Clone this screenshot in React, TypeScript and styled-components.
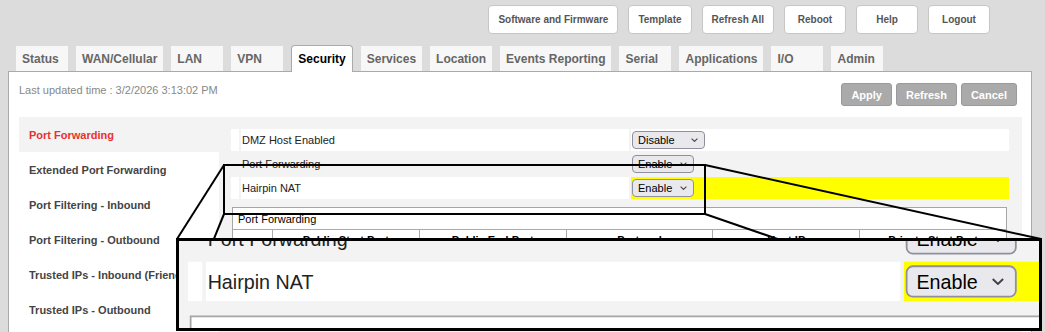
import React from 'react'
import styled, { createGlobalStyle } from 'styled-components'

const GlobalStyle = createGlobalStyle`
  html, body {
    margin: 0;
    padding: 0;
    background: #dcdcdc;
    overflow: hidden;
  }
  body {
    font-family: "Liberation Sans", Arial, sans-serif;
  }
`

const topButtons = ['Software and Firmware', 'Template', 'Refresh All', 'Reboot', 'Help', 'Logout']
const tabs = [
  'Status',
  'WAN/Cellular',
  'LAN',
  'VPN',
  'Security',
  'Services',
  'Location',
  'Events Reporting',
  'Serial',
  'Applications',
  'I/O',
  'Admin',
]
const navItems = [
  'Port Forwarding',
  'Extended Port Forwarding',
  'Port Filtering - Inbound',
  'Port Filtering - Outbound',
  'Trusted IPs - Inbound (Friends)',
  'Trusted IPs - Outbound',
  'Remote Management',
]
const settings = [
  { label: 'DMZ Host Enabled', value: 'Disable', width: 73, filled: true, highlight: false },
  { label: 'Port Forwarding', value: 'Enable', width: 62, filled: false, highlight: false },
  { label: 'Hairpin NAT', value: 'Enable', width: 62, filled: true, highlight: true },
]
const columns = ['Public Start Port', 'Public End Port', 'Protocol', 'Host IP', 'Private Start Port']

// source region of the magnifier and where the zoomed copy is shown
const SOURCE = { x: 224, y: 165, w: 481, h: 49 }
const TARGET = { x: 177, y: 239, w: 864, h: 91 }
const ZOOM = 1.79

const Page = styled.div`
  position: relative;
  width: 1045px;
  height: 332px;
  overflow: hidden;
  background: #dcdcdc;
`

const Screen = styled.div`
  width: 1045px;
  padding-left: 8px;
  box-sizing: border-box;
  background: #dcdcdc;
  font-family: "Liberation Sans", Arial, sans-serif;
`

const TopBar = styled.div`
  width: 1024px;
  height: 46px;
  box-sizing: border-box;
  padding: 5px 42px 0 0;
  display: flex;
  justify-content: flex-end;
  align-items: flex-start;
  gap: 10px;
`

const TopButton = styled.button`
  height: 29px;
  min-width: 62px;
  padding: 0 9px;
  box-sizing: border-box;
  background: #fff;
  border: 1px solid #c6c6c6;
  border-radius: 4px;
  font-family: inherit;
  font-size: 10px;
  font-weight: bold;
  color: #555;
`

const TabBar = styled.div`
  height: 25px;
  padding-left: 8px;
  display: flex;
  align-items: flex-end;
  gap: 8px;
`

const Tab = styled.div<{ $active?: boolean }>`
  position: relative;
  z-index: 1;
  height: ${(p) => (p.$active ? '27px' : '25px')};
  min-width: 52px;
  padding: 0 6px;
  box-sizing: border-box;
  display: flex;
  align-items: center;
  background: ${(p) => (p.$active ? '#fff' : '#f7f7f7')};
  border: ${(p) => (p.$active ? '1px solid #aaa' : 'none')};
  border-bottom: none;
  border-radius: ${(p) => (p.$active ? '4px 4px 0 0' : '0')};
  margin-bottom: ${(p) => (p.$active ? '-1px' : '0')};
  font-size: 12px;
  font-weight: bold;
  color: ${(p) => (p.$active ? '#000' : '#666')};
  white-space: nowrap;
`

const Panel = styled.div`
  width: 1024px;
  min-height: 300px;
  box-sizing: border-box;
  background: #fff;
  border: 1px solid #aaa;
  padding: 11px 9px 0 10px;
`

const PanelHeader = styled.div`
  height: 34px;
  padding-right: 5px;
  display: flex;
  justify-content: space-between;
  align-items: flex-start;
`

const LastUpdated = styled.div`
  padding-top: 1px;
  font-size: 11px;
  line-height: 13px;
  color: #888;
`

const ActionGroup = styled.div`
  display: flex;
  gap: 4px;
`

const ActionButton = styled.button`
  height: 23px;
  padding: 0 9px;
  box-sizing: border-box;
  background: #aaa;
  border: 1px solid #9a9a9a;
  border-radius: 3px;
  font-family: inherit;
  font-size: 11px;
  font-weight: bold;
  color: #fff;
`

const Section = styled.div`
  display: flex;
  min-height: 240px;
`

const Nav = styled.div`
  width: 200px;
  flex-shrink: 0;
  background: #fff;
`

const NavItem = styled.div<{ $active?: boolean }>`
  height: 35px;
  padding-left: 10px;
  display: flex;
  align-items: center;
  background: ${(p) => (p.$active ? '#f3f3f3' : '#fff')};
  font-size: 11px;
  font-weight: bold;
  color: ${(p) => (p.$active ? '#e8322e' : '#444')};
  white-space: nowrap;
  overflow: hidden;
`

const Content = styled.div`
  flex: 1;
  background: #f3f3f3;
  padding: 12px 13px 12px 12px;
`

const SettingsList = styled.div`
  display: flex;
  flex-direction: column;
  gap: 2px;
`

const SettingRow = styled.div`
  height: 22px;
  display: flex;
  gap: 2px;
`

const MarkerCell = styled.div<{ $filled: boolean }>`
  width: 8px;
  background: ${(p) => (p.$filled ? '#fff' : 'transparent')};
`

const LabelCell = styled.div<{ $filled: boolean }>`
  width: 387px;
  padding-left: 1px;
  display: flex;
  align-items: center;
  background: ${(p) => (p.$filled ? '#fff' : 'transparent')};
  font-size: 11px;
  color: #222;
`

const ValueCell = styled.div<{ $filled: boolean; $highlight: boolean }>`
  flex: 1;
  padding-left: 1px;
  display: flex;
  align-items: center;
  background: ${(p) => (p.$highlight ? '#ffff00' : p.$filled ? '#fff' : 'transparent')};
`

const SelectBox = styled.div<{ $width: number }>`
  width: ${(p) => p.$width}px;
  height: 18px;
  box-sizing: border-box;
  padding: 0 6px 0 5px;
  display: flex;
  align-items: center;
  justify-content: space-between;
  background: #e9e9ed;
  border: 1px solid #8f8f9d;
  border-radius: 4px;
  font-size: 11px;
  color: #000;
`

const Chevron = styled.svg`
  width: 7px;
  height: 4px;
  flex-shrink: 0;
`

const TableBox = styled.div`
  margin: 8px 2px 0 1px;
  background: #fff;
  border: 1px solid #a6a6a6;
`

const TableTitle = styled.div`
  height: 21px;
  padding-left: 5px;
  display: flex;
  align-items: center;
  font-size: 11px;
  color: #000;
`

const HeaderRow = styled.div`
  display: grid;
  grid-template-columns: 39px repeat(5, 1fr);
  height: 22px;
  border-top: 1px solid #aaa;
`

const HeaderCell = styled.div`
  border-left: 1px solid #aaa;
  font-size: 11px;
  font-weight: bold;
  line-height: 21px;
  text-align: center;
  color: #000;
  white-space: nowrap;
  &:first-child {
    border-left: none;
  }
`

const CalloutLines = styled.svg`
  position: absolute;
  left: 0;
  top: 0;
  z-index: 5;
  pointer-events: none;
`

const Magnifier = styled.div`
  position: absolute;
  left: ${TARGET.x - 1}px;
  top: ${TARGET.y - 1}px;
  width: ${TARGET.w + 2}px;
  height: ${TARGET.h + 2}px;
  box-sizing: border-box;
  border: 3px solid #000;
  overflow: hidden;
  background: #f3f3f3;
  z-index: 6;
`

const MagnifiedView = styled.div`
  width: 1045px;
  transform-origin: 0 0;
  transform: scale(${ZOOM}) translate(-226px, -165.4px);
`

const SelectValue = ({ value, width }: { value: string; width: number }) => (
  <SelectBox $width={width}>
    <span>{value}</span>
    <Chevron viewBox="0 0 7 4">
      <polyline points="0.6,0.6 3.5,3.4 6.4,0.6" fill="none" stroke="#444" strokeWidth="1.1" />
    </Chevron>
  </SelectBox>
)

const RouterScreen = () => (
  <Screen>
    <TopBar>
      {topButtons.map((b) => (
        <TopButton key={b}>{b}</TopButton>
      ))}
    </TopBar>
    <TabBar>
      {tabs.map((t) => (
        <Tab key={t} $active={t === 'Security'}>
          {t}
        </Tab>
      ))}
    </TabBar>
    <Panel>
      <PanelHeader>
        <LastUpdated>Last updated time : 3/2/2026 3:13:02 PM</LastUpdated>
        <ActionGroup>
          <ActionButton>Apply</ActionButton>
          <ActionButton>Refresh</ActionButton>
          <ActionButton>Cancel</ActionButton>
        </ActionGroup>
      </PanelHeader>
      <Section>
        <Nav>
          {navItems.map((n, i) => (
            <NavItem key={n} $active={i === 0}>
              {n}
            </NavItem>
          ))}
        </Nav>
        <Content>
          <SettingsList>
            {settings.map((s) => (
              <SettingRow key={s.label}>
                <MarkerCell $filled={s.filled} />
                <LabelCell $filled={s.filled}>{s.label}</LabelCell>
                <ValueCell $filled={s.filled} $highlight={s.highlight}>
                  <SelectValue value={s.value} width={s.width} />
                </ValueCell>
              </SettingRow>
            ))}
          </SettingsList>
          <TableBox>
            <TableTitle>Port Forwarding</TableTitle>
            <HeaderRow>
              <HeaderCell />
              {columns.map((c) => (
                <HeaderCell key={c}>{c}</HeaderCell>
              ))}
            </HeaderRow>
          </TableBox>
        </Content>
      </Section>
    </Panel>
  </Screen>
)

export default function App() {
  const sx2 = SOURCE.x + SOURCE.w
  const sy2 = SOURCE.y + SOURCE.h
  const tx2 = TARGET.x + TARGET.w
  const ty2 = TARGET.y + TARGET.h
  return (
    <Page>
      <GlobalStyle />
      <RouterScreen />
      <CalloutLines width="1045" height="332" viewBox="0 0 1045 332">
        <g stroke="#000" strokeWidth="2" fill="none">
          <rect x={SOURCE.x} y={SOURCE.y} width={SOURCE.w} height={SOURCE.h} />
          <line x1={SOURCE.x} y1={SOURCE.y} x2={TARGET.x} y2={TARGET.y} />
          <line x1={SOURCE.x} y1={sy2} x2={TARGET.x} y2={ty2} />
          <line x1={sx2} y1={SOURCE.y} x2={tx2} y2={TARGET.y} />
          <line x1={sx2} y1={sy2} x2={tx2} y2={ty2} />
        </g>
      </CalloutLines>
      <Magnifier>
        <MagnifiedView>
          <RouterScreen />
        </MagnifiedView>
      </Magnifier>
    </Page>
  )
}
